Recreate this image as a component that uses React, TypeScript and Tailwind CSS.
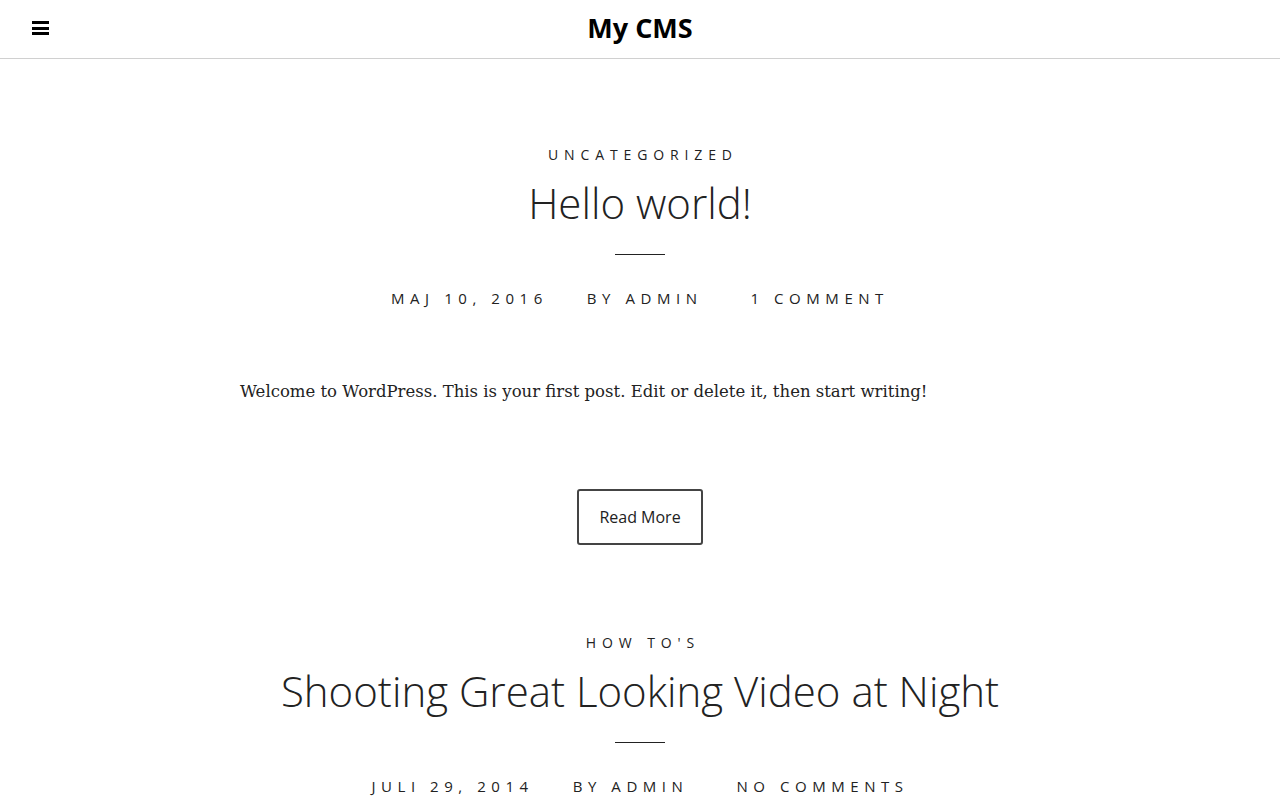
import React from 'react';

const posts = [
  {
    cat: 'Uncategorized',
    title: 'Hello world!',
    date: 'Maj 10, 2016',
    comments: '1 Comment',
    excerpt: 'Welcome to WordPress. This is your first post. Edit or delete it, then start writing!',
  },
  {
    cat: "How To's",
    title: 'Shooting Great Looking Video at Night',
    date: 'Juli 29, 2014',
    comments: 'No Comments',
    excerpt: '',
  },
];

const Post: React.FC<{ p: (typeof posts)[number] }> = ({ p }) => (
  <article className="flex flex-col items-center">
    <div className="text-[14px] leading-5 uppercase tracking-[0.42em] text-[#222] pl-[0.42em]">{p.cat}</div>
    <h2 className="mt-[12px] text-[42px] leading-[52px] font-light text-[#222]">{p.title}</h2>
    <div className="mt-[25px] w-[50px] h-px bg-[#222]" />
    <div className="mt-[33px] flex gap-[39px] text-[15px] leading-5 uppercase tracking-[0.37em] text-[#222]">
      <span>{p.date}</span>
      <span>By Admin</span>
      <span className="ml-[9px]">{p.comments}</span>
    </div>
    {p.excerpt && (
      <>
        <p className="mt-[68px] self-stretch text-[16.5px] leading-8 text-[#222]" style={{ fontFamily: '"DejaVu Serif", serif' }}>
          {p.excerpt}
        </p>
        <a href="#" className="mt-[81px] border-2 border-[#444] rounded-[3px] w-[126px] h-[56px] flex items-center justify-center text-[16px] text-[#222]">
          Read More
        </a>
      </>
    )}
  </article>
);

export default function App() {
  return (
    <div className="min-h-screen bg-white" style={{ fontFamily: '"Open Sans", sans-serif' }}>
      <header className="h-[59px] border-b border-[#d0d0d0] flex items-center relative">
        <button className="absolute left-[32px] top-[21px] w-[17px] h-[14px] flex flex-col justify-between">
          <span className="block h-[3px] bg-black" />
          <span className="block h-[3px] bg-black" />
          <span className="block h-[3px] bg-black" />
        </button>
        <h1 className="flex-1 text-center text-[27px] font-bold text-black leading-none pb-[4px]">My CMS</h1>
      </header>
      <main className="w-[800px] mx-auto pt-[86px] flex flex-col gap-[88px]">
        {posts.map((p) => (
          <Post key={p.title} p={p} />
        ))}
      </main>
    </div>
  );
}
